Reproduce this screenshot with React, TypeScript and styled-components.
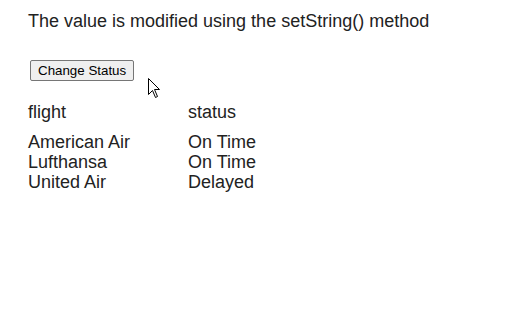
import React from "react";
import styled, { createGlobalStyle } from "styled-components";

const Global = createGlobalStyle`
  html, body { margin: 0; padding: 0; background: #fff; }
  body { font-family: "Liberation Sans", Arial, sans-serif; color: #222; }
`;

const Page = styled.div`
  position: relative;
  padding: 11px 28px 0 28px;
  width: 530px;
  height: 318px;
  box-sizing: border-box;
`;

const Title = styled.p`
  margin: 0;
  font-size: 18px;
  line-height: 21px;
`;

const StatusButton = styled.button`
  margin: 28px 0 0 2px;
  height: 21px;
  padding: 0 7px;
  font-family: "Liberation Sans", Arial, sans-serif;
  font-size: 13.33px;
  color: #000;
  background: #efefef;
  border: 1px solid #767676;
  border-radius: 2px;
  display: block;
`;

const Table = styled.div`
  margin-top: 21px;
  display: grid;
  grid-template-columns: 160px 160px;
  font-size: 18px;
  line-height: 20px;
`;

const HeadCell = styled.div`
  padding-bottom: 10px;
`;

const Cell = styled.div``;

const Cursor = styled.svg`
  position: absolute;
  left: 148px;
  top: 78px;
`;

const rows = [
  ["American Air", "On Time"],
  ["Lufthansa", "On Time"],
  ["United Air", "Delayed"],
];

export default function App() {
  return (
    <Page>
      <Global />
      <Title>The value is modified using the setString() method</Title>
      <StatusButton>Change Status</StatusButton>
      <Table>
        <HeadCell>flight</HeadCell>
        <HeadCell>status</HeadCell>
        {rows.map(([f, s]) => (
          <React.Fragment key={f}>
            <Cell>{f}</Cell>
            <Cell>{s}</Cell>
          </React.Fragment>
        ))}
      </Table>
      <Cursor width="13" height="21" viewBox="0 0 13 21">
        <path
          d="M0.5 0.5 L0.5 16.5 L4.5 12.5 L7.5 19.5 L9.5 18.5 L6.5 11.5 L11.5 11.5 Z"
          fill="#fff"
          stroke="#000"
          strokeWidth="1"
          strokeLinejoin="miter"
        />
      </Cursor>
    </Page>
  );
}
